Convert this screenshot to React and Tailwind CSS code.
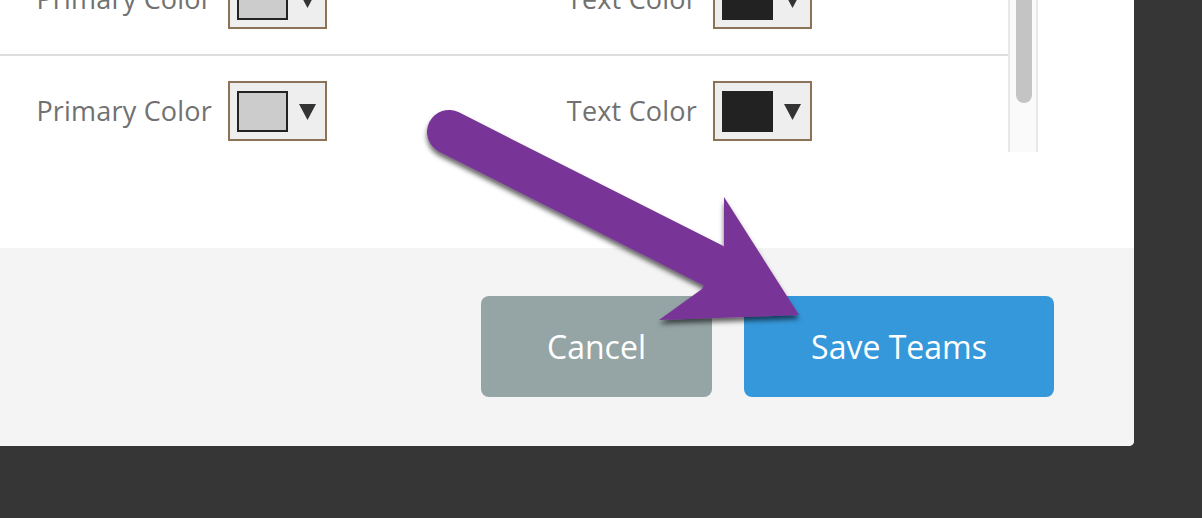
import React from "react";

const font = { fontFamily: '"Open Sans", "Liberation Sans", sans-serif' };

function ColorBox({ color }) {
  return (
    <div className="flex h-[60px] w-[99px] items-center border-2 border-[#8c7358] bg-[#eeeeee] pl-[7px]">
      <div className="h-[41px] w-[51px] border-2 border-[#222222]" style={{ background: color }} />
      <svg width="17" height="17" viewBox="0 0 17 17" className="ml-[11px]">
        <polygon points="0,1 17,1 8.5,17" fill="#333333" />
      </svg>
    </div>
  );
}

function Field({ label, color }) {
  return (
    <div className="flex items-center">
      <div className="-mt-[2px] w-[228px] pr-[16px] text-right text-[27px] leading-none tracking-[0.2px] text-[#717171]" style={font}>
        {label}
      </div>
      <ColorBox color={color} />
    </div>
  );
}

function Row({ border }) {
  return (
    <div className={`grid grid-cols-[485px_485px] pt-[25px] pb-[25px] ${border ? "border-b-2 border-[#dddddd]" : ""}`}>
      <Field label="Primary Color" color="#cccccc" />
      <Field label="Text Color" color="#222222" />
    </div>
  );
}

export default function App() {
  return (
    <div className="relative h-[518px] w-[1202px] overflow-hidden bg-[#363636]" style={font}>
      <div className="flex h-[446px] w-[1134px] flex-col overflow-hidden rounded-br-[5px] bg-white">
        <div className="h-[248px] bg-white">
          <div className="flex h-[152px]">
            <div className="h-[152px] w-[1008px] overflow-hidden">
              <div className="-mt-[56px]">
                <Row border />
                <Row />
              </div>
            </div>
            <div className="h-[152px] w-[30px] border-x-2 border-[#e8e8e8] bg-[#fafafa] px-[6px]">
              <div className="h-[103px] w-[16px] rounded-b-full bg-[#c4c4c4]" />
            </div>
          </div>
        </div>
        <div className="flex flex-1 items-start justify-end gap-[32px] bg-[#f4f4f4] pr-[80px] pt-[48px]">
          <button className="flex h-[101px] w-[231px] items-center justify-center rounded-[8px] bg-[#95a5a6] text-[32px] font-medium text-white" style={font}>
            Cancel
          </button>
          <button className="flex h-[101px] w-[310px] items-center justify-center rounded-[8px] bg-[#3598db] text-[32px] font-medium text-white" style={font}>
            Save Teams
          </button>
        </div>
      </div>

      <svg className="pointer-events-none absolute left-0 top-0" width="1202" height="518" viewBox="0 0 1202 518">
        <defs>
          <filter id="sh" x="-20%" y="-20%" width="140%" height="140%">
            <feDropShadow dx="0" dy="4" stdDeviation="2.5" floodColor="#000" floodOpacity="0.6" />
          </filter>
        </defs>
        <g filter="url(#sh)" fill="#783597">
          <line x1="449" y1="132" x2="712" y2="265" stroke="#783597" strokeWidth="44" strokeLinecap="round" />
          <polygon points="724,197 799,315 659,320 702,289 712,265 724,250" />
        </g>
      </svg>
    </div>
  );
}
